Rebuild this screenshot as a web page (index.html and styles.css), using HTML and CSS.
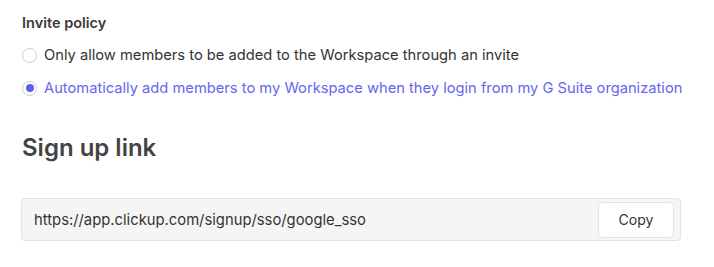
FILE: index.html
```html
<!DOCTYPE html>
<html>
<head>
<meta charset="utf-8">
<link rel="stylesheet" href="styles.css">
</head>
<body>
<div class="page">
  <div class="label">Invite policy</div>
  <div class="options">
    <label class="option">
      <span class="radio"></span>
      <span class="option-text">Only allow members to be added to the Workspace through an invite</span>
    </label>
    <label class="option option-active">
      <span class="radio radio-on"><span class="dot"></span></span>
      <span class="option-text">Automatically add members to my Workspace when they login from my G Suite organization</span>
    </label>
  </div>
  <h2 class="heading">Sign up link</h2>
  <div class="linkbox">
    <span class="url">https://app.clickup.com/signup/sso/google_sso</span>
    <button class="copy">Copy</button>
  </div>
</div>
</body>
</html>
```
FILE: styles.css
```css
* { box-sizing: border-box; }
html, body { margin: 0; padding: 0; background: #fff; }
body {
  font-family: Inter, "Noto Sans", "Liberation Sans", sans-serif;
  color: #333;
  width: 714px;
  height: 267px;
  overflow: hidden;
}
.page {
  padding: 13px 0 0 22px;
  width: 681px;
}
.label {
  font-size: 14.5px;
  font-weight: 600;
  line-height: 20px;
  color: #3a3a3a;
}
.options {
  margin-top: 12px;
  display: flex;
  flex-direction: column;
  gap: 13px;
}
.option {
  display: flex;
  align-items: center;
  gap: 7px;
  font-size: 14.7px;
  line-height: 20px;
  color: #333;
  white-space: nowrap;
}
.option-active { color: #6466ee; }
.radio {
  width: 15px;
  height: 15px;
  border-radius: 50%;
  border: 1px solid #cfcfcf;
  background: #fff;
  display: flex;
  align-items: center;
  justify-content: center;
  flex: none;
}
.dot {
  width: 8px;
  height: 8px;
  border-radius: 50%;
  background: #5f5fe8;
}
.heading {
  margin: 35px 0 0 0;
  font-size: 24px;
  font-weight: 600;
  line-height: 30px;
  color: #444;
}
.linkbox {
  margin-top: 35px;
  margin-left: -1px;
  height: 43px;
  border: 1px solid #e3e3e3;
  border-radius: 4px;
  background: #f5f5f5;
  display: flex;
  align-items: center;
  justify-content: space-between;
  padding: 0 6px 0 12px;
}
.url {
  font-size: 14.8px;
  color: #333;
}
.copy {
  font-family: inherit;
  width: 76px;
  height: 36px;
  background: #fff;
  border: 1px solid #e3e3e3;
  border-radius: 4px;
  font-size: 14px;
  color: #333;
  padding: 0;
}
```
